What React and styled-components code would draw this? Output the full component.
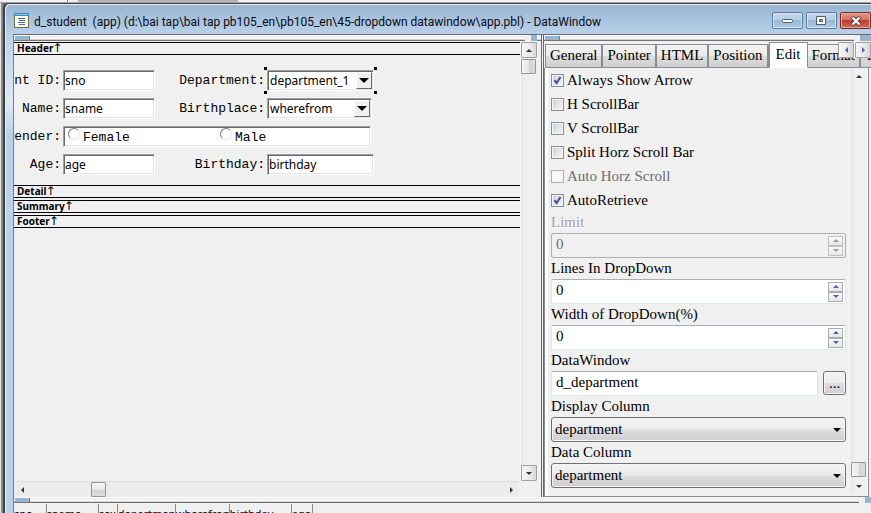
import React from 'react';
import styled, { createGlobalStyle, css } from 'styled-components';

const UI = '"Noto Sans", "Open Sans", sans-serif';
const CAPTION = 'Roboto, "Open Sans", sans-serif';
const SERIF = '"Liberation Serif", serif';
const MONO = '"Liberation Mono", monospace';

const Global = createGlobalStyle`
  * { box-sizing: border-box; }
  html, body { margin: 0; height: 100%; overflow: hidden; background: #f0f0f0; }
  #root { height: 100%; }
  button, input, select { margin: 0; color: #000; }
  button { padding: 0; }
`;

const Desktop = styled.div`
  height: 100vh;
  display: flex;
  flex-direction: column;
  overflow: hidden;
  background: #a8a8a8;
`;

const Backdrop = styled.div`
  flex: none;
  display: flex;
  height: 3px;
  border-bottom: 1px solid #a5a5a5;
  background: #f0f0f0;
`;

const BackdropEdge = styled.div`
  width: 68px;
  border-right: 1px solid #8c8c8c;
`;

const BackdropShade = styled.div`
  margin-left: 10px;
  width: 160px;
  background: #b4b4b4;
`;

const Workspace = styled.div`
  flex: 1;
  min-height: 0;
  display: flex;
  padding-left: 3px;
  background: linear-gradient(90deg, #e8e8e8 0 1px, #8a8a8a 1px 3px, #6b6b6b 3px);
`;

const Window = styled.section`
  flex: 1;
  min-width: 0;
  display: flex;
  flex-direction: column;
  border-top: 1px solid #3d3d3d;
  border-left: 2px solid #3d3d3d;
  border-top-left-radius: 6px;
  background: linear-gradient(#99b4d1 0, #b9d1ea 30px, #dfe9f4 100px, #b9d1ea 130px);
  box-shadow: inset 1px 1px 0 #e6eff9;
`;

const TitleBar = styled.header`
  flex: none;
  height: 30px;
  display: flex;
  align-items: center;
  padding-top: 3px;
  padding-left: 9px;
  gap: 5px;
`;

const Title = styled.h1`
  flex: 1;
  min-width: 0;
  margin: 0;
  padding-top: 2px;
  font: 400 12px/20px ${CAPTION};
  color: #0a0a14;
  white-space: pre;
  overflow: hidden;
`;

const CaptionButtons = styled.div`
  display: flex;
  gap: 3px;
`;

const CaptionButton = styled.button`
  width: 31px;
  height: 17px;
  display: grid;
  place-items: center;
  border: 1px solid ${p => (p.$close ? '#7a2a22' : '#5f7d9d')};
  border-radius: 2px;
  background: ${p => (p.$close
    ? 'linear-gradient(#dd9a8c 0, #d3705f 46%, #bc3d28 50%, #cf7059 100%)'
    : 'linear-gradient(#c4d8ee 0, #b4cbe4 46%, #98b6d6 50%, #b0cbe8 100%)')};
  box-shadow: inset 0 0 0 1px ${p => (p.$close ? '#e8aa9e' : '#d3e3f4')};
`;

const Client = styled.main`
  flex: 1;
  min-height: 0;
  margin-left: 8px;
  display: flex;
  flex-direction: column;
  border-top: 1px solid #6a6a6a;
  border-left: 1px solid #7d7d7d;
  background: #f0f0f0;
`;

const Split = styled.div`
  flex: 1;
  min-height: 0;
  display: grid;
  grid-template-columns: minmax(0, 1fr) 330px;
`;

const PaneStrip = styled.div`
  flex: none;
  height: 7px;
  display: flex;
  background: linear-gradient(#fff 0 1px, #f0f0f0 1px 3px, #fff 3px 4px, #d0d0d0 4px 5px, #747474 5px 6px, #f0f0f0 6px);
`;

const PaneGrip = styled.span`
  width: 15px;
  height: 4px;
  margin: 1px 0 0 1px;
  border-right: 1px solid #777;
  background: #99b4d1;
`;

const StripCorner = styled.span`
  width: ${p => p.$width || 6}px;
  height: 6px;
  margin: 0 ${p => p.$inset || 0}px 0 auto;
  border-left: 6px solid #f0f0f0;
  box-sizing: content-box;
  background: #99b4d1;
`;

const DesignPane = styled.section`
  min-width: 0;
  min-height: 0;
  display: flex;
  flex-direction: column;
`;

const DesignBody = styled.div`
  flex: 1;
  min-height: 0;
  display: grid;
  grid-template-columns: minmax(0, 1fr) 16px;
  grid-template-rows: minmax(0, 1fr) 16px;
  margin-right: 4px;
`;

const Canvas = styled.div`
  overflow: hidden;
  background: #f0f0f0;
  border-right: 1px solid #f8f8f8;
`;

const Band = styled.h2`
  height: 13px;
  margin: 0 0 ${p => p.$gap || 0}px;
  padding-left: 3px;
  display: flex;
  align-items: center;
  border-top: 1px solid #000;
  border-bottom: 1px solid #000;
  font: 700 10px/11px ${UI};
`;

const BandArrow = styled.span`
  font: 400 12px/11px "DejaVu Sans", sans-serif;
  width: 8px;
  display: flex;
  justify-content: center;
`;

const Fields = styled.form`
  height: 130px;
  padding-top: 15px;
  display: grid;
  grid-template-columns: 47px 92px 108px 107px;
  grid-auto-rows: 28px;
  column-gap: 2px;
  align-items: start;
`;

const FieldLabel = styled.label`
  display: flex;
  justify-content: flex-end;
  overflow: hidden;
  font: 400 13px/22px ${MONO};
  white-space: pre;
`;

const sunken = css`
  border: 1px solid;
  border-color: #a0a0a0 #fff #fff #a0a0a0;
  border-radius: 0;
  outline: none;
  background: #fff;
  box-shadow: inset 1px 1px 0 #696969, inset -1px -1px 0 #e3e3e3;
`;

const FieldBox = styled.input`
  width: 100%;
  height: 21px;
  padding: 0 1px;
  font: 400 12px/17px ${UI};
  ${sunken}
`;

const ComboFrame = styled.div`
  position: relative;
  width: ${p => (p.$wide ? 107 : 105)}px;
  ${p => p.$selected && css`
    &::before, &::after {
      content: '';
      position: absolute;
      left: -3px;
      right: -3px;
      height: 3px;
      background: linear-gradient(90deg, #000 3px, transparent 3px calc(100% - 3px), #000 calc(100% - 3px));
    }
    &::before { top: -3px; }
    &::after { bottom: -3px; }
  `}
`;

const ComboSelect = styled.select`
  display: block;
  width: 100%;
  height: 21px;
  padding: 0 2px;
  appearance: none;
  font: 400 12px/17px ${UI};
  ${sunken}
`;

const ComboArrow = styled.span`
  position: absolute;
  top: 2px;
  right: 2px;
  width: 16px;
  height: 17px;
  display: grid;
  place-items: center;
  pointer-events: none;
  border: 1px solid;
  border-color: #fff #696969 #696969 #fff;
  background: #f0f0f0;
`;

const RadioGroup = styled.div`
  grid-column: span 3;
  width: 308px;
  height: 21px;
  display: grid;
  grid-template-columns: 152px 1fr;
  padding-left: 4px;
  ${sunken}
`;

const RadioLabel = styled.label`
  display: flex;
  align-items: flex-start;
  gap: 3px;
  font: 400 13px/21px ${MONO};
`;

const Radio = styled.input`
  appearance: none;
  width: 12px;
  height: 12px;
  margin: 1px 0 0;
  border: 1px solid;
  border-color: #777 #e3e3e3 #e3e3e3 #777;
  border-radius: 50%;
  background: #fff;
`;

const VScroll = styled.div`
  width: 16px;
  display: flex;
  flex-direction: column;
  background: linear-gradient(90deg, #e6e6e6, #f0f0f0 30%, #f0f0f0);
`;

const HScroll = styled.div`
  height: 16px;
  margin-right: 2px;
  display: flex;
  align-items: stretch;
  border-top: 1px solid #dedede;
  background: #ececec;
`;

const ScrollButton = styled.button`
  flex: none;
  width: 16px;
  height: 16px;
  display: grid;
  place-items: center;
  border: 1px solid ${p => (p.$flat ? 'transparent' : '#a0a0a0')};
  border-radius: 1px;
  background: ${p => (p.$flat ? 'transparent' : 'linear-gradient(90deg, #f6f6f6, #ececec 50%, #d6d6d6)')};
`;

const ScrollThumb = styled.div`
  flex: none;
  width: 15px;
  height: 15px;
  margin: ${p => p.$margin || '1px 0 0'};
  border: 1px solid #979797;
  border-radius: 1px;
  background: linear-gradient(${p => (p.$across ? '180deg' : '90deg')}, #f5f5f5, #e8e8e8 50%, #d2d2d2 52%, #dcdcdc);
`;

const Spring = styled.span`
  flex: 1;
`;

const PropertyPane = styled.aside`
  min-width: 0;
  min-height: 0;
  display: flex;
  flex-direction: column;
  border-left: 3px double #696969;
  background: #f0f0f0;
`;

const TabBar = styled.div`
  position: relative;
  flex: none;
  height: 26px;
  display: flex;
  align-items: flex-end;
  padding-left: 1px;
  overflow: hidden;
`;

const Tab = styled.button`
  flex: none;
  height: ${p => (p.$active ? 26 : 24)}px;
  padding: ${p => (p.$active ? '0 6px 3px' : '0 4px 2px')};
  border: 1px solid #898c95;
  border-left-width: ${p => (p.$first || p.$active ? 1 : 0)}px;
  border-bottom-color: ${p => (p.$active ? '#fff' : '#898c95')};
  border-right-width: ${p => (p.$active ? 1 : 2)}px;
  background: ${p => (p.$active ? '#fff' : 'linear-gradient(#f2f2f2 0, #ebebeb 50%, #dcdcdc 52%, #cfcfcf 100%)')};
  font: 400 15px/20px ${SERIF};
`;

const TabScroller = styled.div`
  position: absolute;
  top: 0;
  right: 0;
  display: flex;
  gap: 1px;
  background: #fff;
`;

const PropertyBody = styled.div`
  flex: 1;
  min-height: 0;
  display: flex;
  margin-right: 2px;
  padding: 0 1px 2px 3px;
  border: 1px solid #898c95;
  border-top: 0;
  background: linear-gradient(90deg, #fff 3px, #f0f0f0 3px calc(100% - 1px), #fff calc(100% - 1px));
`;

const PropertyForm = styled.form`
  flex: 1;
  min-width: 0;
  padding: 0 5px 0 3px;
  font: 400 15px/22px ${SERIF};
`;

const CheckLabel = styled.label`
  height: 24px;
  display: flex;
  align-items: center;
  gap: 3px;
  color: ${p => (p.$disabled ? '#6d6d6d' : '#000')};
`;

const CheckBox = styled.input`
  appearance: none;
  width: 13px;
  height: 13px;
  margin: 0;
  border: 1px solid ${p => (p.disabled ? '#b1b1b1' : '#8e8f8f')};
  background: ${p => (p.disabled ? '#fafafa' : 'linear-gradient(135deg, #cbcfd5, #f6f6f6) padding-box')};
  box-shadow: inset 0 0 0 1px #f4f4f4;
  &:checked {
    background:
      url("data:image/svg+xml,%3Csvg xmlns='http://www.w3.org/2000/svg' viewBox='0 0 11 11'%3E%3Cpath d='M2.5 5.2 4.6 8 8.5 2' fill='none' stroke='%2338509c' stroke-width='2'/%3E%3C/svg%3E") center / 11px 11px no-repeat,
      linear-gradient(135deg, #cbcfd5, #f6f6f6);
  }
`;

const PropertyLabel = styled.label`
  display: block;
  height: 21px;
  line-height: 21px;
  color: ${p => (p.$disabled ? '#a0a0a0' : '#000')};
  text-shadow: ${p => (p.$disabled ? '1px 1px 0 #fff' : 'none')};
`;

const SpinFrame = styled.div`
  height: 25px;
  display: flex;
  align-items: center;
  padding-right: 2px;
  border: 1px solid;
  border-color: ${p => (p.$disabled ? '#afafaf' : '#abadb3 #e2e3ea #e3e9ef #e2e3ea')};
  border-radius: 2px;
  background: ${p => (p.$disabled ? '#f0f0f0' : '#fff')};
`;

const PlainInput = styled.input`
  flex: 1;
  min-width: 0;
  height: 23px;
  padding: 0 4px 2px;
  border: 0;
  outline: none;
  background: transparent;
  font: 400 15px/20px ${SERIF};
  &:disabled { color: #6d6d6d; }
`;

const SpinButtons = styled.div`
  display: flex;
  flex-direction: column;
`;

const SpinButton = styled.button`
  width: 15px;
  height: 10px;
  display: grid;
  place-items: center;
  border: 1px solid ${p => (p.disabled ? '#bfbfbf' : '#abadb3')};
  background: linear-gradient(#fafafa, #e6e6e6);
`;

const InlineRow = styled.div`
  display: flex;
  gap: 5px;
`;

const TextFrame = styled(SpinFrame)`
  flex: 1;
  min-width: 0;
`;

const raised = css`
  border: 1px solid #707070;
  border-radius: 3px;
  background: linear-gradient(#f2f2f2 0, #ebebeb 49%, #dddddd 51%, #cfcfcf 100%);
  box-shadow: inset 0 0 0 1px #f6f6f6;
`;

const BrowseButton = styled.button`
  width: 23px;
  height: 24px;
  font: 400 15px/20px ${SERIF};
  ${raised}
`;

const DropFrame = styled.div`
  position: relative;
`;

const DropSelect = styled.select`
  display: block;
  width: 100%;
  height: 25px;
  padding: 0 3px 2px;
  appearance: none;
  outline: none;
  font: 400 15px/20px ${SERIF};
  ${raised}
`;

const DropArrow = styled.span`
  position: absolute;
  top: 11px;
  right: 5px;
  display: grid;
  pointer-events: none;
`;

const ResultPane = styled.section`
  flex: none;
  height: 9px;
  overflow: hidden;
`;

const ResultTable = styled.table`
  table-layout: fixed;
  width: 299px;
  border-collapse: collapse;
  font: 400 11px/14px ${UI};
`;

const ResultHead = styled.th`
  width: ${p => p.$width}px;
  height: 18px;
  padding: 1px 0 0;
  border-right: 1px solid #888;
  font-weight: 400;
  text-align: left;
  white-space: nowrap;
  overflow: hidden;
  background: #f0f0f0;
`;

const points = {
  up: s => `0,${s} ${s},0 ${2 * s},${s}`,
  down: s => `0,0 ${s},${s} ${2 * s},0`,
  left: s => `${s},0 0,${s} ${s},${2 * s}`,
  right: s => `0,0 ${s},${s} 0,${2 * s}`,
};

function Arrow({ dir, size = 3, color = '#333' }) {
  const flat = dir === 'up' || dir === 'down';
  return (
    <svg width={flat ? size * 2 : size} height={flat ? size : size * 2} fill={color} aria-hidden="true">
      <polygon points={points[dir](size)} />
    </svg>
  );
}

function WindowIcon() {
  return (
    <svg width="15" height="15" viewBox="0 0 15 15" aria-hidden="true">
      <rect x=".5" y=".5" width="14" height="14" fill="#fffef4" stroke="#776b48" />
      <rect width="15" height="3" fill="#378bb8" />
      <path d="M1 1.5h13" stroke="#8acbe7" />
      <path d="M4 5.5h7M5 7.5h6M4 9.5h7M5 11.5h6" stroke="#4d6797" />
    </svg>
  );
}

function BandTitle({ gap, children }) {
  return <Band $gap={gap}>{children}<BandArrow>↑</BandArrow></Band>;
}

function DesignCombo({ id, value, wide, selected }) {
  return (
    <ComboFrame $wide={wide} $selected={selected}>
      <ComboSelect id={id} defaultValue={value}><option>{value}</option></ComboSelect>
      <ComboArrow><Arrow dir="down" size={5} color="#000" /></ComboArrow>
    </ComboFrame>
  );
}

function Check({ label, checked, disabled }) {
  return (
    <CheckLabel $disabled={disabled}>
      <CheckBox type="checkbox" defaultChecked={checked} disabled={disabled} />
      {label}
    </CheckLabel>
  );
}

function SpinField({ id, label, disabled }) {
  const color = disabled ? '#999' : '#4a62b0';
  return (
    <>
      <PropertyLabel htmlFor={id} $disabled={disabled}>{label}</PropertyLabel>
      <SpinFrame $disabled={disabled}>
        <PlainInput id={id} type="text" defaultValue="0" disabled={disabled} />
        <SpinButtons>
          <SpinButton type="button" disabled={disabled} aria-label="Increase"><Arrow dir="up" color={color} /></SpinButton>
          <SpinButton type="button" disabled={disabled} aria-label="Decrease"><Arrow dir="down" color={color} /></SpinButton>
        </SpinButtons>
      </SpinFrame>
    </>
  );
}

function DropField({ id, label, value }) {
  return (
    <>
      <PropertyLabel htmlFor={id}>{label}</PropertyLabel>
      <DropFrame>
        <DropSelect id={id} defaultValue={value}><option>{value}</option></DropSelect>
        <DropArrow><Arrow dir="down" size={4} color="#000" /></DropArrow>
      </DropFrame>
    </>
  );
}

const tabs = ['General', 'Pointer', 'HTML', 'Position', 'Edit', 'Format', 'Text'];

const columns = [
  ['sno', 32], ['sname', 52], ['sex', 19], ['department', 58],
  ['wherefrom', 54], ['birthday', 62], ['age', 21],
];

export default function App() {
  return (
    <Desktop>
      <Global />
      <Backdrop><BackdropEdge /><BackdropShade /></Backdrop>
      <Workspace>
        <Window>
          <TitleBar>
            <WindowIcon />
            <Title>{'d_student  (app) (d:\\bai tap\\bai tap pb105_en\\pb105_en\\45-dropdown datawindow\\app.pbl) - DataWindow'}</Title>
            <CaptionButtons>
              <CaptionButton type="button" aria-label="Minimize">
                <svg width="12" height="6"><rect x=".5" y="1.5" width="10" height="3" rx="1" fill="#fff" stroke="#4d5a6b" /></svg>
              </CaptionButton>
              <CaptionButton type="button" aria-label="Maximize">
                <svg width="11" height="9"><path d="M.5.5h9v8h-9zM3.500 3.500h3v2h-3z" fill="#fff" fillRule="evenodd" stroke="#4d5a6b" /></svg>
              </CaptionButton>
              <CaptionButton type="button" $close aria-label="Close">
                <svg width="12" height="10" viewBox="0 0 12 10"><path d="m2 1 8 8M10 1 2 9" stroke="#5b4550" strokeWidth="4" /><path d="m2.500 1.500 7 7M9.500 1.500l-7 7" stroke="#fff" strokeWidth="2" /></svg>
              </CaptionButton>
            </CaptionButtons>
          </TitleBar>
          <Client>
            <Split>
              <DesignPane>
                <PaneStrip><PaneGrip /><StripCorner $inset={4} /></PaneStrip>
                <DesignBody>
                  <Canvas>
                    <BandTitle>Header</BandTitle>
                    <Fields>
                      <FieldLabel htmlFor="sno">Student ID:</FieldLabel>
                      <FieldBox id="sno" defaultValue="sno" />
                      <FieldLabel htmlFor="department">Department:</FieldLabel>
                      <DesignCombo id="department" value="department_1" wide selected />
                      <FieldLabel htmlFor="sname">Name:</FieldLabel>
                      <FieldBox id="sname" defaultValue="sname" />
                      <FieldLabel htmlFor="wherefrom">Birthplace:</FieldLabel>
                      <DesignCombo id="wherefrom" value="wherefrom" />
                      <FieldLabel as="span" id="gender">Gender:</FieldLabel>
                      <RadioGroup role="radiogroup" aria-labelledby="gender">
                        <RadioLabel><Radio type="radio" name="gender" />Female</RadioLabel>
                        <RadioLabel><Radio type="radio" name="gender" />Male</RadioLabel>
                      </RadioGroup>
                      <FieldLabel htmlFor="age">Age:</FieldLabel>
                      <FieldBox id="age" defaultValue="age" />
                      <FieldLabel htmlFor="birthday">Birthday:</FieldLabel>
                      <FieldBox id="birthday" defaultValue="birthday" />
                    </Fields>
                    <BandTitle gap={2}>Detail</BandTitle>
                    <BandTitle gap={2}>Summary</BandTitle>
                    <BandTitle>Footer</BandTitle>
                  </Canvas>
                  <VScroll>
                    <ScrollButton type="button" aria-label="Scroll up"><Arrow dir="up" /></ScrollButton>
                    <ScrollThumb />
                    <Spring />
                    <ScrollButton type="button" aria-label="Scroll down"><Arrow dir="down" /></ScrollButton>
                  </VScroll>
                  <HScroll>
                    <ScrollButton type="button" $flat aria-label="Scroll left"><Arrow dir="left" /></ScrollButton>
                    <ScrollThumb $across $margin="0 0 0 61px" />
                    <Spring />
                    <ScrollButton type="button" $flat aria-label="Scroll right"><Arrow dir="right" /></ScrollButton>
                  </HScroll>
                </DesignBody>
              </DesignPane>
              <PropertyPane>
                <PaneStrip><PaneGrip /><StripCorner $width={11} /></PaneStrip>
                <TabBar role="tablist">
                  {tabs.map((t, i) => (
                    <Tab key={t} type="button" role="tab" $first={i === 0} $active={t === 'Edit'} aria-selected={t === 'Edit'}>{t}</Tab>
                  ))}
                  <TabScroller>
                    <ScrollButton type="button" aria-label="Previous tabs"><Arrow dir="left" color="#4a62b0" /></ScrollButton>
                    <ScrollButton type="button" aria-label="Next tabs"><Arrow dir="right" color="#4a62b0" /></ScrollButton>
                  </TabScroller>
                </TabBar>
                <PropertyBody>
                  <PropertyForm>
                    <Check label="Always Show Arrow" checked />
                    <Check label="H ScrollBar" />
                    <Check label="V ScrollBar" />
                    <Check label="Split Horz Scroll Bar" />
                    <Check label="Auto Horz Scroll" disabled />
                    <Check label="AutoRetrieve" checked />
                    <SpinField id="limit" label="Limit" disabled />
                    <SpinField id="lines" label="Lines In DropDown" />
                    <SpinField id="width" label="Width of DropDown(%)" />
                    <PropertyLabel htmlFor="datawindow">DataWindow</PropertyLabel>
                    <InlineRow>
                      <TextFrame><PlainInput id="datawindow" type="text" defaultValue="d_department" /></TextFrame>
                      <BrowseButton type="button">...</BrowseButton>
                    </InlineRow>
                    <DropField id="display" label="Display Column" value="department" />
                    <DropField id="data" label="Data Column" value="department" />
                  </PropertyForm>
                  <VScroll>
                    <ScrollButton type="button" $flat aria-label="Scroll up"><Arrow dir="up" /></ScrollButton>
                    <Spring />
                    <ScrollThumb $margin="0 0 1px" />
                    <ScrollButton type="button" $flat aria-label="Scroll down"><Arrow dir="down" /></ScrollButton>
                  </VScroll>
                </PropertyBody>
              </PropertyPane>
            </Split>
            <PaneStrip><PaneGrip /><StripCorner $width={6} /></PaneStrip>
            <ResultPane>
              <ResultTable>
                <thead>
                  <tr>{columns.map(([name, width]) => <ResultHead key={name} $width={width}>{name}</ResultHead>)}</tr>
                </thead>
              </ResultTable>
            </ResultPane>
          </Client>
        </Window>
      </Workspace>
    </Desktop>
  );
}
